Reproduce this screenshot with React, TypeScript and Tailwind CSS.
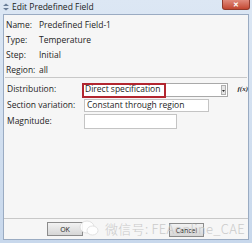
export default function App() {
  return (
    <div className="w-[252px] h-[243px] bg-gradient-to-b from-[#dce7f4] to-[#c8d8ec] flex flex-col font-['Open_Sans',sans-serif] text-[8.5px] leading-none text-[#1e1e1e] overflow-hidden">
      {/* Title bar */}
      <div className="h-[14px] flex items-start relative">
        <svg width="8" height="8" viewBox="0 0 8 8" className="ml-[2px] mt-[3px]">
          <path d="M4 0.5 L7 3 H1 Z" fill="#6b7f99" />
          <path d="M4 7.5 L7 5 H1 Z" fill="#6b7f99" />
        </svg>
        <span className="ml-[2px] mt-[3px] text-[8.5px] text-[#222]">Edit Predefined Field</span>
        <div className="absolute right-[2px] top-0 w-[28px] h-[10px] rounded-b-[3px] bg-gradient-to-b from-[#e08a7c] to-[#c24630] border border-[#8f3a2c] border-t-0 flex items-center justify-center">
          <span className="text-white text-[7px] font-bold leading-none">✕</span>
        </div>
      </div>
      {/* Body */}
      <div className="flex-1 mx-[3px] mb-[3px] border border-[#9aabc2] bg-[#f6f6f6] flex flex-col">
        <div className="flex flex-col gap-[7px] pl-[2px] pt-[6px] h-[62px]">
          <Row label="Name:" value="Predefined Field-1" />
          <Row label="Type:" value="Temperature" />
          <Row label="Step:" value="Initial" />
          <Row label="Region:" value="all" />
        </div>
        <div className="h-px bg-[#c8c8c8] mx-[1px]" />
        <div className="flex flex-col pl-[3px] pt-[3px] gap-[1px]">
          <div className="flex items-center h-[17px]">
            <span className="w-[75px] shrink-0">Distribution:</span>
            <div className="relative w-[146px] h-[14px] bg-white border border-[#a9a9a9] flex items-center">
              <span className="pl-[2px]">Direct specification</span>
              <div className="absolute right-[1px] top-[1px] w-[5px] h-[10px] bg-[#e6e6e6] border border-[#b0b0b0] flex items-end justify-center">
                <svg width="3" height="2" viewBox="0 0 3 2" className="mb-[2px]"><path d="M0 0 H3 L1.5 2 Z" fill="#333" /></svg>
              </div>
              <div className="absolute -left-[1px] -top-[1px] w-[84px] h-[15px] border-2 border-[#b2262f]" />
            </div>
            <span className="ml-[10px] italic font-bold text-[7px] font-['Liberation_Serif',serif]">f(x)</span>
          </div>
          <div className="flex items-center h-[14px] -mt-[1px]">
            <span className="w-[77px] shrink-0">Section variation:</span>
            <div className="w-[125px] h-[13px] bg-white border border-[#c4c4c4] flex items-center">
              <span className="pl-[2px]">Constant through region</span>
            </div>
          </div>
          <div className="flex items-center h-[15px] mt-[1px]">
            <span className="w-[77px] shrink-0">Magnitude:</span>
            <div className="w-[93px] h-[15px] bg-white border border-[#c4c4c4]" />
          </div>
        </div>
        <div className="flex-1" />
        <div className="h-px bg-[#c8c8c8]" />
        <div className="h-[20px] relative flex items-center">
          <div className="absolute left-[43px] top-[3px] w-[36px] h-[14px] border border-[#8c8c8c] bg-gradient-to-b from-[#f2f2f2] to-[#d6d6d6] flex items-center justify-center text-[7px]">OK</div>
          <div className="absolute left-[165px] top-[4px] w-[35px] h-[14px] border border-[#8c8c8c] bg-gradient-to-b from-[#f2f2f2] to-[#d6d6d6] flex items-center justify-center text-[7px]">Cancel</div>
          <div className="absolute left-[75px] top-[1px] flex items-center text-[#c6c6c6] opacity-90">
            <svg width="20" height="16" viewBox="0 0 20 16">
              <ellipse cx="8" cy="7" rx="7" ry="6" fill="white" stroke="#d8d8d8" strokeWidth="0.8" />
              <ellipse cx="13.5" cy="10.5" rx="5.5" ry="4.5" fill="white" stroke="#d8d8d8" strokeWidth="0.8" />
            </svg>
            <span className="ml-[6px] font-['Noto_Sans_CJK_SC',sans-serif] font-light text-[13px] tracking-[0.3px]">微信号: FEAonline_CAE</span>
          </div>
        </div>
      </div>
    </div>
  );
}

function Row({ label, value }: { label: string; value: string }) {
  return (
    <div className="flex h-[8px] items-center">
      <span className="w-[33px] shrink-0">{label}</span>
      <span>{value}</span>
    </div>
  );
}
